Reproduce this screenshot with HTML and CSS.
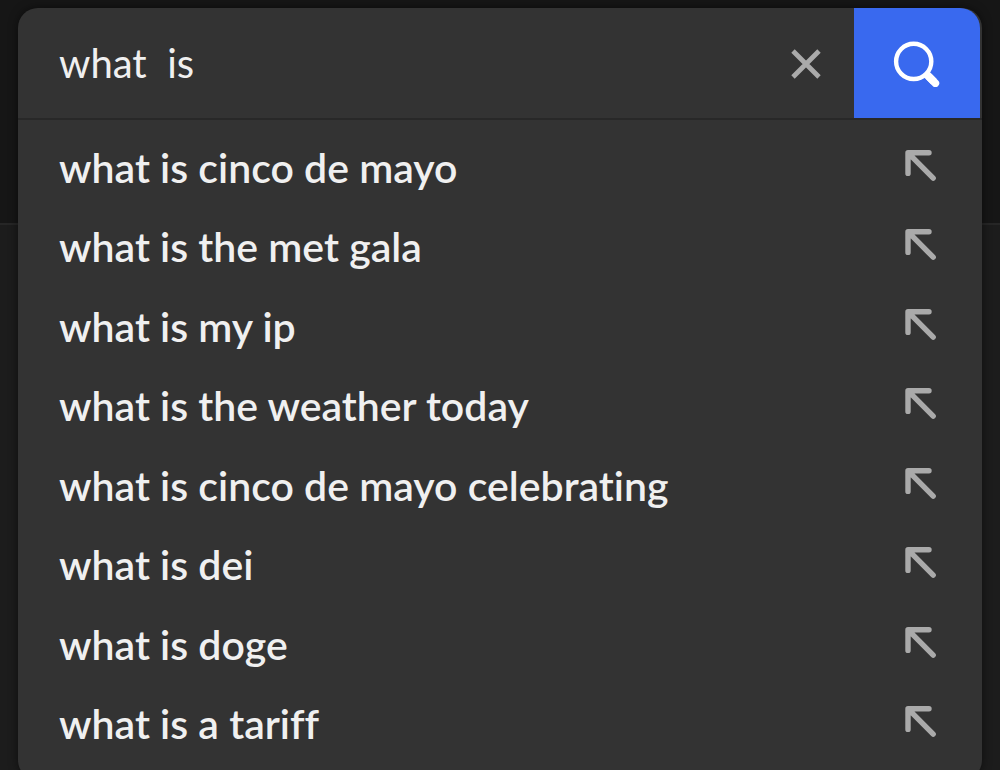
FILE: index.html
```
<!DOCTYPE html>
<html lang="en-US">
<head>
<meta charset="UTF-8" />
<meta name="viewport" content="width=device-width, initial-scale=1" />
<title>Search</title>
<link rel="stylesheet" href="styles.css">
</head>
<body>
    <svg width="0" height="0" class="sprite" aria-hidden="true">
        <symbol id="arrow" viewBox="0 0 34 34">
            <path d="M4 24.4V3.8H25M4.6 4.4L29.2 29.2" fill="none" stroke="currentColor" stroke-width="5.4" stroke-linecap="round" stroke-linejoin="round"></path>
        </symbol>
    </svg>
    <form class="search">
        <div class="search__bar">
            <input class="search__input" type="text" value="what  is" aria-label="Search" autocomplete="off">
            <button class="search__clear" type="reset" aria-label="Clear">
                <svg width="32" height="32" viewBox="0 0 32 32" aria-hidden="true">
                    <path d="M3 3L29 29M29 3L3 29" fill="none" stroke="currentColor" stroke-width="4.8"></path>
                </svg>
            </button>
            <button class="search__submit" type="submit" aria-label="Search">
                <svg width="48" height="48" viewBox="0 0 48 48" aria-hidden="true">
                    <circle cx="20.7" cy="22.4" r="17.6" fill="none" stroke="currentColor" stroke-width="4.4"></circle>
                    <path d="M32.5 34.2L41 42.7" fill="none" stroke="currentColor" stroke-width="7.6"></path>
                    <path d="M36 37.8L42.4 44.2" fill="none" stroke="currentColor" stroke-width="7.6" stroke-linecap="round"></path>
                </svg>
            </button>
        </div>
        <ul class="suggestions">
            <li><button type="button" class="suggestion">what is cinco de mayo<svg class="suggestion__icon"><use href="#arrow"></use></svg></button></li>
            <li><button type="button" class="suggestion">what is the met gala<svg class="suggestion__icon"><use href="#arrow"></use></svg></button></li>
            <li><button type="button" class="suggestion">what is my ip<svg class="suggestion__icon"><use href="#arrow"></use></svg></button></li>
            <li><button type="button" class="suggestion">what is the weather today<svg class="suggestion__icon"><use href="#arrow"></use></svg></button></li>
            <li><button type="button" class="suggestion">what is cinco de mayo celebrating<svg class="suggestion__icon"><use href="#arrow"></use></svg></button></li>
            <li><button type="button" class="suggestion">what is dei<svg class="suggestion__icon"><use href="#arrow"></use></svg></button></li>
            <li><button type="button" class="suggestion">what is doge<svg class="suggestion__icon"><use href="#arrow"></use></svg></button></li>
            <li><button type="button" class="suggestion">what is a tariff<svg class="suggestion__icon"><use href="#arrow"></use></svg></button></li>
        </ul>
    </form>
</body>
</html>
```
FILE: styles.css
```
*{
    box-sizing: border-box;
}
html{
    background-color: #1c1c1c;
}
body{
    margin: 0;
    padding: 8px 18px 0;
    height: 100vh;
    overflow: hidden;
    font-family: Lato, "Liberation Sans", sans-serif;
    color: #f0f0f0;
    background: linear-gradient(#161616 223px, #262626 223px, #262626 225px, #1c1c1c 225px);
}
button,
input{
    margin: 0;
    padding: 0;
    border: none;
    background: none;
    font: inherit;
    font-variant-ligatures: none;
    color: inherit;
}
button{
    cursor: pointer;
}
.sprite{
    position: absolute;
}
.search{
    background-color: #333333;
    border-radius: 20px;
    box-shadow: 0 0 10px rgba(0, 0, 0, 0.5);
}
.search__bar{
    display: flex;
    height: 112px;
    padding-right: 2px;
    border-bottom: 2px solid #282828;
}
.search__input{
    flex: 1;
    min-width: 0;
    padding-left: 41px;
    font-size: 40px;
    font-weight: 400;
    outline: none;
}
.search__clear{
    display: flex;
    align-items: center;
    justify-content: center;
    width: 96px;
    padding-top: 2px;
    color: #aaaaaa;
}
.search__submit{
    display: flex;
    align-items: center;
    justify-content: center;
    width: 126px;
    color: #ffffff;
    background-color: #3969ef;
    border-top-right-radius: 20px;
}
.suggestions{
    display: grid;
    grid-auto-rows: 1fr;
    min-height: 660px;
    margin: 0;
    padding: 6px 0 18px;
    list-style: none;
}
.suggestion{
    display: flex;
    align-items: center;
    justify-content: space-between;
    width: 100%;
    height: 100%;
    padding: 4px 44px 0 41px;
    font-size: 41px;
    font-weight: 600;
    line-height: 48px;
    text-align: left;
}
.suggestion__icon{
    flex: none;
    width: 34px;
    height: 34px;
    margin-bottom: 4px;
    color: #aaaaaa;
}
```
